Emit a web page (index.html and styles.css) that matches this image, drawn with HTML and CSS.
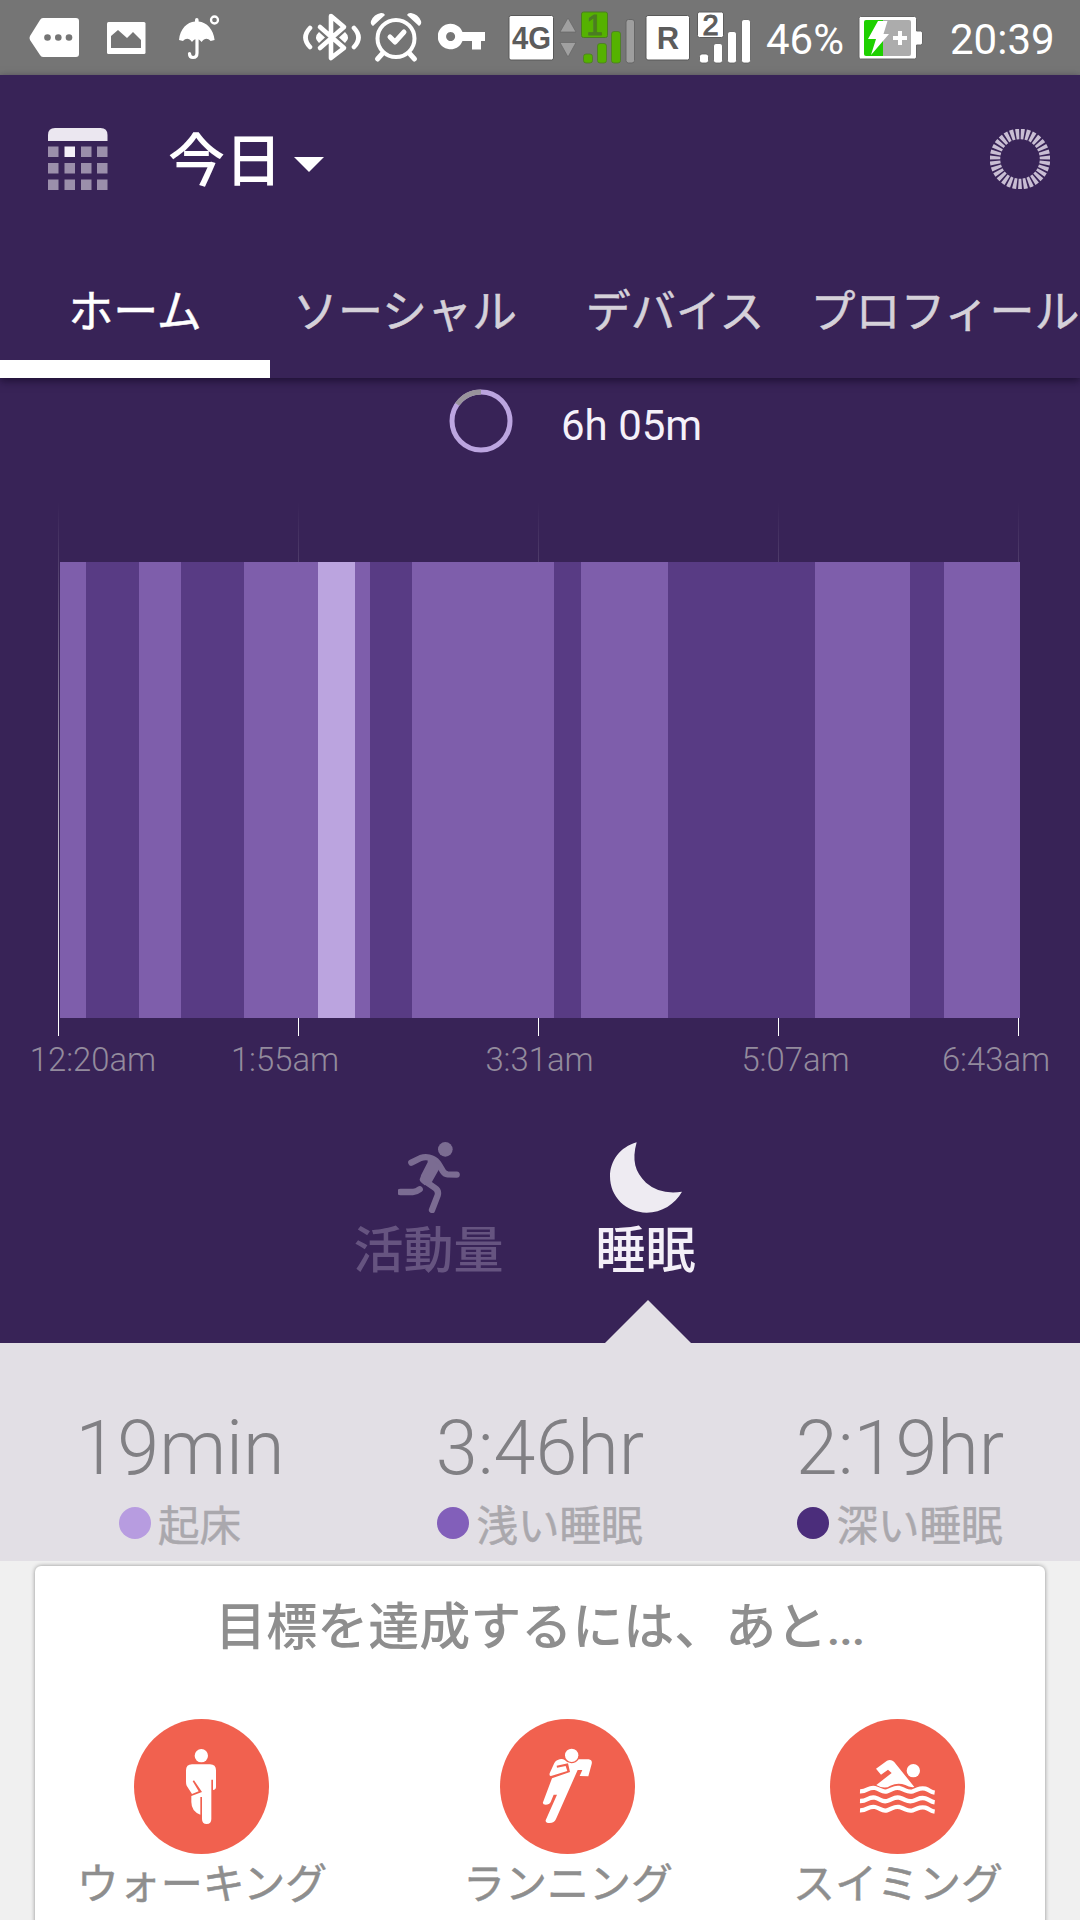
FILE: index.html
```
<!DOCTYPE html>
<html lang="ja">
<head>
    <meta charset="UTF-8">
    <meta name="viewport" content="width=device-width, initial-scale=1.0">
    <title>今日</title>
    <link rel="stylesheet" href="styles.css">
</head>
<body>

<div class="status-bar">
    <svg class="st-message" width="50" height="75" viewBox="29 0 50 75">
        <path fill="#fff" d="M43 18h33q3 0 3 3v33q0 3-3 3H43q-2 0-3-2L30 40q-1-2 0-4l10-16q1-2 3-2z"/>
        <g fill="#757575"><circle cx="47.5" cy="37.5" r="3.3"/><circle cx="58.3" cy="37.5" r="3.3"/><circle cx="69" cy="37.5" r="3.3"/></g>
    </svg>
    <svg class="st-image" width="39" height="75" viewBox="107 0 39 75">
        <rect x="107" y="22" width="38.5" height="32" rx="1.5" fill="#fff"/>
        <path fill="#757575" d="M111 48V36l7-6 9 8 6-6 8 8v8z"/>
    </svg>
    <svg class="st-umbrella" width="41" height="75" viewBox="179 0 41 75">
        <path fill="#fff" d="M179 40c1-11 8-18 16-18.500V20q0-2 1.800-2t1.800 2v1.500c8 .5 15 8 16 18.500l-4 1c-3-3-6-3-9 1-3-4-7-4-9.600 0-3-4-6-4-9-1z"/>
        <path fill="none" stroke="#fff" stroke-width="3.2" stroke-linecap="round" d="M197 38v15q0 4.500-4 4.500-3.500 0-3.500-4"/>
        <circle cx="214.5" cy="20" r="3.5" fill="none" stroke="#fff" stroke-width="2.3"/>
    </svg>
    <svg class="st-bluetooth" width="60" height="75" viewBox="302 0 60 75">
        <g fill="none" stroke="#fff" stroke-width="4.6" stroke-linecap="round" stroke-linejoin="round">
            <path d="M320 27l24 21-13 10V16l13 11-24 21"/>
            <path d="M310 28q-9 9.500 0 19M354 28q9 9.500 0 19"/>
        </g>
        <path fill="#fff" d="M319 32l6 5.500-6 5.500q-6-5.500 0-11zM345 32l-6 5.500 6 5.500q6-5.500 0-11z"/>
    </svg>
    <svg class="st-alarm" width="52" height="75" viewBox="370 0 52 75">
        <g fill="none" stroke="#fff" stroke-width="4" stroke-linecap="round" stroke-linejoin="round">
            <circle cx="396" cy="38.5" r="18.5"/>
            <path stroke-width="5" d="M382 54l-4.500 5M410 54l4.500 5M390 37l5 5 9-10"/>
        </g>
        <path fill="#fff" d="M373 26q-3-2-2-5 3-7 10-8 3-.3 4 2zM419 26q3-2 2-5-3-7-10-8-3-.3-4 2z"/>
    </svg>
    <svg class="st-key" width="48" height="75" viewBox="438 0 48 75">
        <path fill="#fff" fill-rule="evenodd" d="M462.500 32H485v9h-4v8.500h-9V41h-9.500a12.800 12.800 0 1 1 0-9zM450.600 32a4.500 4.500 0 1 0 .01 0z"/>
    </svg>
    <svg class="st-sim" width="129" height="75" viewBox="508 0 129 75">
        <rect x="509" y="15.5" width="44.5" height="44.5" rx="2" fill="#fff" stroke="#585858"/>
        <text class="net" x="531.5" y="48.5" textLength="39" lengthAdjust="spacingAndGlyphs">4G</text>
        <path fill="#a0a0a0" stroke="#666" stroke-width=".7" d="M560 32h16l-8-14zM560 42.500h16l-8 14.500z"/>
        <rect x="581.5" y="12" width="26" height="25.5" rx="2" fill="#55b200" stroke="#4b7c23"/>
        <text class="slot slot-on" x="594.5" y="34.5">1</text>
        <g fill="#55b200" stroke="#4b7c23" stroke-width=".8">
            <rect x="583.5" y="54" width="9" height="9" rx="2.5"/>
            <rect x="597.5" y="43.5" width="9" height="19.5" rx="2.5"/>
            <rect x="611.5" y="31.5" width="9" height="31.5" rx="2.5"/>
        </g>
        <rect x="626" y="19.5" width="8.5" height="43.5" rx="2.5" fill="#9e9e9e" stroke="#666"/>
    </svg>
    <svg class="st-sim2" width="107" height="75" viewBox="645 0 107 75">
        <rect x="646" y="15.5" width="43.5" height="44.5" rx="2" fill="#fff" stroke="#585858"/>
        <text class="net" x="668" y="48.5">R</text>
        <rect x="697.5" y="12" width="26" height="25.5" rx="2" fill="#fff" stroke="#5c5c5c"/>
        <text class="slot" x="710.5" y="34.5">2</text>
        <g fill="#fff" stroke="#5c5c5c" stroke-width=".8">
            <rect x="699.5" y="54" width="9" height="9" rx="2.5"/>
            <rect x="713.5" y="43.5" width="9" height="19.5" rx="2.5"/>
            <rect x="727.5" y="31.5" width="9" height="31.5" rx="2.5"/>
            <rect x="741.5" y="19.5" width="9" height="43.5" rx="2.5"/>
        </g>
    </svg>
    <span class="st-percent">46%</span>
    <svg class="st-battery" width="65" height="75" viewBox="858 0 65 75">
        <path fill="#fff" stroke="#666" d="M860.500 16.500h54q2 0 2 2V31h4q2 0 2 2v10q0 2-2 2h-4v12q0 2-2 2h-54q-1.500 0-1.500-2V18.500q0-2 1.500-2z"/>
        <path fill="#acacac" d="M883 20h26q2 0 2 2v32q0 2-2 2h-26z"/>
        <path fill="#1ed000" d="M866 20h17v36h-17q-2 0-2-2V22q0-2 2-2z"/>
        <path fill="#fff" d="M878 21h9.500l-4 13h5.500l-18 21 5-16h-8z"/>
        <path stroke="#fff" stroke-width="4" d="M893 38h14M900 31v14"/>
    </svg>
    <span class="st-clock">20:39</span>
</div>

<header class="header">
    <div class="title-row">
        <svg class="calendar" width="60" height="63" viewBox="0 0 60 63">
            <path fill="#ebe7f0" d="M0 13V7q0-7 7-7h45.500q7 0 7 7v6z"/>
            <g fill="#9b8fab">
                <path d="M0 18.500h10.500V29H0zM33 18.500h10.500V29H33zM49 18.500h10.500V29H49z"/>
                <path d="M0 35h10.500v10.500H0zM16.500 35H27v10.500H16.500zM33 35h10.500v10.500H33zM49 35h10.500v10.500H49z"/>
                <path d="M0 51.500h10.500V62H0zM16.500 51.500H27V62H16.500zM33 51.500h10.500V62H33zM49 51.500h10.500V62H49z"/>
            </g>
            <path fill="#f4f0f8" d="M16.500 18.500H27V29H16.500z"/>
        </svg>
        <h1>今日</h1>
        <span class="caret"></span>
        <svg class="sync" width="60" height="60" viewBox="0 0 60 60">
            <circle cx="30" cy="30" r="25" pathLength="62" fill="none" stroke="#c8bdd3" stroke-width="10.5" stroke-dasharray="1.35 .65" stroke-dashoffset="1.175"/>
        </svg>
    </div>
    <nav class="tabs">
        <div class="tab active">ホーム</div>
        <div class="tab">ソーシャル</div>
        <div class="tab">デバイス</div>
        <div class="tab">プロフィール</div>
    </nav>
</header>

<section class="sleep">
    <div class="total">
        <svg width="64" height="64" viewBox="0 0 64 64">
            <circle cx="32" cy="32" r="29" fill="none" stroke="#bca5e0" stroke-width="5"/>
            <path d="M8.200 15.400A29 29 0 0 1 32 3" fill="none" stroke="#99949c" stroke-width="5"/>
        </svg>
        <span>6h 05m</span>
    </div>

    <div class="chart">
        <div class="grid-lines"><i></i><i></i><i></i><i></i><i></i></div>
        <div class="bars" id="bars"></div>
    </div>
    <div class="times">
        <span>12:20am</span>
        <span>1:55am</span>
        <span>3:31am</span>
        <span>5:07am</span>
        <span>6:43am</span>
    </div>

    <div class="modes">
        <div class="mode">
            <svg width="62" height="71" viewBox="201 67 186 213">
                <g fill="none" stroke="#7b6c92" stroke-width="19" stroke-linecap="round" stroke-linejoin="round">
                    <path d="M241 129l28-14q18-6 35 2 12 5 20 18l12 20q5 8 14 9l27 1"/>
                    <path d="M276 180l36 25q12 8 8 22l-17 44"/>
                    <path d="M208 217h38q10 0 20-8"/>
                </g>
                <path fill="#7b6c92" d="M290 112l40 26-27 48-22 11q-18-11-11-30l20-39z"/>
                <circle cx="343" cy="89" r="22" fill="#7b6c92"/>
            </svg>
            <span>活動量</span>
        </div>
        <div class="mode on">
            <svg width="72" height="71" viewBox="840 65 216 213">
                <path fill="#eeebf2" d="M920 66C905 120 915 155 948 187Q990 224 1056 214C1035 251 995 277 950 277 888 277 840 230 840 168 840 122 870 80 920 66z"/>
            </svg>
            <span>睡眠</span>
        </div>
    </div>
</section>

<section class="stats">
    <div class="stat">
        <div class="value">19min</div>
        <div class="label"><i class="dot awake"></i>起床</div>
    </div>
    <div class="stat">
        <div class="value">3:46hr</div>
        <div class="label"><i class="dot light"></i>浅い睡眠</div>
    </div>
    <div class="stat">
        <div class="value">2:19hr</div>
        <div class="label"><i class="dot deep"></i>深い睡眠</div>
    </div>
</section>

<section class="card">
    <h2>目標を達成するには、あと<span>...</span></h2>
    <div class="goals">
        <div class="goal">
            <svg width="135" height="135" viewBox="102 57 405 405">
                <circle cx="304.5" cy="259.5" r="202.5" fill="#f1614f"/>
                <g fill="#fff">
                    <circle cx="304" cy="167" r="20"/>
                    <path d="M276 193h54q18 0 18 18v50q0 8-9 9v-31h-5v118q0 15-14 15-14 0-14-15v-66h-5v53q-27-10-27-38v-18l32-12-24-35-4 3 18 30-20 8-16-25q-2-5-2-12v-34q0-18 18-18z"/>
                </g>
            </svg>
            <span>ウォーキング</span>
        </div>
        <div class="goal">
            <svg width="135" height="135" viewBox="150 57 405 405">
                <circle cx="352.5" cy="259.5" r="202.5" fill="#f1614f"/>
                <g fill="#fff">
                    <path d="M323 180q12-6 21 0 7 9 20 10 14 0 22-12h30q12 2 9 14l-10 37-26-1 8-18h-14l-65 147q-5 12-19 12-13 0-12-8l34-77h-10l-9 22q-4 8-15 8-10-1-8-7l27-72 54-19-6-26-34 7 1 6 26-5 5 15-49 15q-6 0-4-8l14-31q4-7 10-9z"/>
                    <circle cx="365" cy="166" r="20"/>
                </g>
            </svg>
            <span>ランニング</span>
        </div>
        <div class="goal">
            <svg width="135" height="135" viewBox="150 57 405 405">
                <circle cx="352.5" cy="259.5" r="202.5" fill="#f1614f"/>
                <g fill="#fff">
                    <circle cx="400" cy="212" r="20"/>
                    <path d="M288 206l33-24q12-5 21 3l61 76q-15 2-27-6-22-9-45 2-17 12-42-2l46-36-11-10-21 15z"/>
                </g>
                <g fill="none" stroke="#fff" stroke-width="13">
                    <path d="M240 274c22 1 25-14 45-10 18 4 20 14 36 10s20-13 37-10c22 6 22 14 40 10 18-5 20-12 38-8 14 4 14 10 28 12"/>
                    <path d="M240 303c22 1 25-14 45-10 18 4 20 14 36 10s20-13 37-10c22 6 22 14 40 10 18-5 20-12 38-8 14 4 14 10 28 12"/>
                    <path d="M240 331c22 1 25-14 45-10 18 4 20 14 36 10s20-13 37-10c22 6 22 14 40 10 18-5 20-12 38-8 14 4 14 10 28 12"/>
                </g>
            </svg>
            <span>スイミング</span>
        </div>
    </div>
</section>

<script>
    // sleep stages: [type, width]
    const stages = [
        ['light', 26], ['deep', 53], ['light', 42], ['deep', 63], ['light', 74],
        ['awake', 37], ['light', 15], ['deep', 42], ['light', 142], ['deep', 27],
        ['light', 87], ['deep', 147], ['light', 95], ['deep', 34], ['light', 76]
    ];
    const bars = document.getElementById('bars');

    stages.forEach(([type, width]) => {
        const bar = document.createElement('div');
        bar.className = 'bar ' + type;
        bar.style.width = width + 'px';
        bars.appendChild(bar);
    });
</script>

</body>
</html>
```

FILE: styles.css
```
* { box-sizing: border-box; }
body {
    margin: 0;
    width: 1080px;
    height: 1920px;
    overflow: hidden;
    background-color: #f0f0f0;
    font-family: Roboto, "Noto Sans CJK JP", sans-serif;
}
svg { display: block; flex-shrink: 0; }

.status-bar {
    display: flex;
    height: 75px;
    padding-left: 29px;
    background-color: #757575;
    color: #fff;
    font-size: 42px;
    line-height: 79px;
    white-space: nowrap;
}
.st-image { margin-left: 28px; }
.st-umbrella { margin-left: 33px; }
.st-bluetooth { margin-left: 82px; }
.st-alarm { margin-left: 8px; }
.st-key { margin-left: 16px; }
.st-sim { margin-left: 22px; }
.st-sim2 { margin-left: 8px; }
.st-percent { width: 80px; margin-left: 14px; }
.st-battery { margin-left: 12px; }
.st-clock { margin-left: 27px; }
.net, .slot {
    font-family: "Liberation Sans", sans-serif;
    font-weight: bold;
    text-anchor: middle;
    fill: #5c5c5c;
}
.net { font-size: 31px; }
.slot { font-size: 29px; font-weight: normal; stroke: #5c5c5c; }
.slot-on { fill: #4b7c23; stroke: #4b7c23; }

.header {
    position: relative;
    height: 303px;
    background-color: #382357;
    box-shadow: 0 3px 8px rgba(20, 8, 38, 0.7);
}
.title-row {
    display: flex;
    align-items: center;
    height: 168px;
    padding: 0 30px 0 48px;
    color: #fff;
}
.title-row h1 {
    margin: 6px 0 0 60px;
    font-size: 57px;
    font-weight: 500;
    line-height: 80px;
}
.caret {
    margin: 11px 0 0 12px;
    border: 15px solid transparent;
    border-top-color: #fff;
    border-bottom: 0;
}
.sync { margin-left: auto; }
.tabs { display: flex; height: 135px; }
.tab {
    width: 270px;
    height: 135px;
    color: #d5d1d9;
    font-size: 45px;
    line-height: 140px;
    text-align: center;
    white-space: nowrap;
    -webkit-text-stroke: 0.5px;
}
.tab.active { color: #fff; border-bottom: 18px solid #fff; }

.sleep { height: 965px; background-color: #382357; }
.total {
    display: flex;
    height: 124px;
    padding: 11px 0 0 449px;
    color: #f5f1fa;
    font-size: 42px;
}
.total span { margin-left: 48px; line-height: 74px; }

.chart {
    display: grid;
    height: 534px;
    padding-left: 58px;
}
.grid-lines, .bars { grid-area: 1 / 1; }
.grid-lines { display: flex; gap: 239px; }
.grid-lines i {
    width: 1px;
    background: linear-gradient(rgba(255, 255, 255, 0), #fff 95%);
}
.bars {
    display: flex;
    z-index: 1;
    height: 456px;
    margin: 60px 0 0 2px;
}
.light { background-color: #7e5eab; }
.deep { background-color: #583b84; }
.awake { background-color: #bba4df; }

.times {
    display: grid;
    grid-template-columns: 186px 198px 311px 201px 200px;
    height: 106px;
    overflow: hidden;
    color: #938b9d;
    font-size: 32.8px;
    font-weight: 300;
    line-height: 49px;
    text-align: center;
}

.modes { display: flex; padding-left: 320px; }
.mode {
    display: flex;
    flex-direction: column;
    align-items: center;
    width: 217px;
    color: #665480;
    font-size: 50px;
    font-weight: 500;
    line-height: 77px;
}
.mode.on { color: #f3eff8; }

.stats {
    position: relative;
    display: flex;
    height: 218px;
    background-color: #e2dfe5;
}
/* pointer under the selected mode */
.stats::before {
    content: "";
    position: absolute;
    left: 605px;
    top: -43px;
    border: 43px solid transparent;
    border-top: 0;
    border-bottom-color: #e2dfe5;
}
.stat { width: 360px; padding-top: 60px; text-align: center; }
.value {
    color: #818084;
    font-size: 75.5px;
    font-weight: 300;
    line-height: 90px;
}
.label {
    display: flex;
    align-items: center;
    justify-content: center;
    height: 60px;
    color: #aaa8ad;
    font-size: 41.5px;
    -webkit-text-stroke: 0.5px;
}
.dot {
    width: 32px;
    height: 32px;
    margin-right: 7px;
    border-radius: 50%;
}
.dot.awake { background-color: #b79ce0; }
.dot.light { background-color: #825fba; }
.dot.deep { background-color: #4b2d7b; }

.card {
    width: 1010px;
    height: 400px;
    margin: 5px auto 0;
    background-color: #fff;
    border-radius: 6px;
    box-shadow: 0 0 4px rgba(0, 0, 0, 0.4);
    color: #8e8e8e;
}
.card h2 {
    margin: 0;
    height: 153px;
    font-size: 51px;
    font-weight: 500;
    line-height: 123px;
    text-align: center;
}
.card h2 span { font-size: 43px; font-weight: 700; }
.goals {
    display: grid;
    grid-template-columns: 333px 399px 261px;
    font-size: 42px;
    -webkit-text-stroke: 0.5px;
}
.goal {
    display: flex;
    flex-direction: column;
    align-items: center;
    line-height: 61px;
}
.goal span { padding-left: 1px; }
```
